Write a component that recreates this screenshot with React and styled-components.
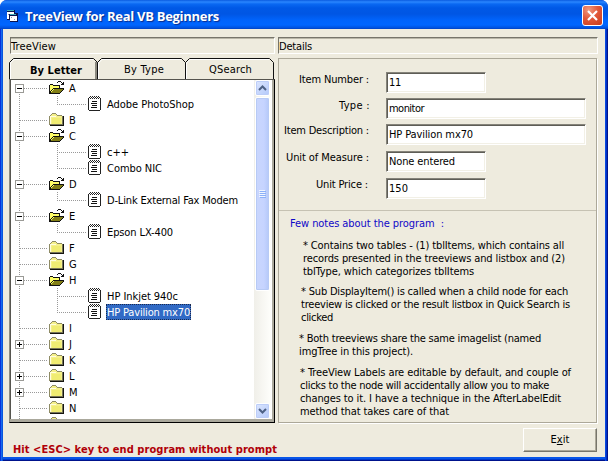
import React, { useLayoutEffect, useRef, useState } from 'react';
import styled, { createGlobalStyle, css } from 'styled-components';

const Global = createGlobalStyle`
  * { box-sizing: border-box; }
  body { margin: 0; overflow: hidden; }
`;

const ui = '"DejaVu Sans Condensed", "DejaVu Sans", "Noto Sans", sans-serif';
const face = '#eeebde';

const Window = styled.div`
  width: 608px;
  height: 461px;
  display: flex;
  flex-direction: column;
  background: linear-gradient(90deg, #0831d9 0 1px, #166aee 1px 2px, #0855dd 2px 3px, transparent 3px 605px, #0848e0 605px 606px, #0032c4 606px 607px, #00138c 607px), linear-gradient(0deg, #00138c 0 1px, #0038cc 1px 2px, #0855e8 2px 4px, transparent 4px), #0831d9;
  border-radius: 7px 7px 0 0;
  font: 11px/13px ${ui};
  font-stretch: condensed;
  color: #000;
`;

const TitleBar = styled.header`
  height: 29px;
  flex: none;
  display: flex;
  align-items: center;
  padding: 2px 5px 0 7px;
  border-radius: 7px 7px 0 0;
  background: linear-gradient(180deg, #0a5be0 0, #2a86ff 2px, #0a68f2 4px, #0058e6 8px, #0056e4 14px, #0063fb 20px, #0066ff 25px, #0050dc 28px, #0040c0 29px);
`;

const TitleText = styled.h1`
  margin: 0 auto 0 7px;
  font: bold 13px/18px "Open Sans", "Noto Sans", sans-serif;
  font-stretch: normal;
  color: #fff;
  text-shadow: 1px 1px 1px #0a2c8c;
`;

const CloseButton = styled.button`
  width: 21px;
  height: 21px;
  padding: 0;
  display: grid;
  place-items: center;
  border: 1px solid #fff;
  border-radius: 3px;
  background: radial-gradient(circle at 30% 20%, #f09a80 0, #e2593a 45%, #c83a1a 100%);
`;

const Body = styled.main`
  flex: 1;
  min-height: 0;
  margin: 0 3px 4px;
  padding: 8px 7px 0 6px;
  background: ${face};
  display: grid;
  grid-template-columns: 266px 320px;
  grid-template-rows: 386px 34px;
  column-gap: 3px;
`;

const Column = styled.section`
  display: flex;
  flex-direction: column;
`;

const Caption = styled.div`
  height: 17px;
  flex: none;
  margin-left: ${p => p.$inset || 0}px;
  padding-top: 2px;
  border: 1px solid;
  border-color: #77756b #fff #fff #77756b;
  box-shadow: inset 0 1px #b9b6a8;
`;

const FitSpan = styled.span`
  display: inline-block;
  white-space: pre;
`;

/* Spreads or tightens the tracking so that a line takes a given width. */
function Fit({ w, children }) {
  const ref = useRef(null);
  const [spacing, setSpacing] = useState(null);
  useLayoutEffect(() => {
    const el = ref.current;
    el.style.letterSpacing = '0px';
    const n = el.textContent.length;
    setSpacing((w - el.getBoundingClientRect().width) / n);
  }, [w]);
  return <FitSpan ref={ref} style={{ letterSpacing: spacing === null ? undefined : `${spacing}px` }}>{children}</FitSpan>;
}

const TabStrip = styled.nav`
  display: grid;
  grid-template-columns: 88px 88px 90px;
  height: 21px;
  margin-top: 4px;
`;

const Tab = styled.button`
  position: relative;
  padding: 2px 0 0 ${p => p.$pad}px;
  border: 0;
  background: none;
  text-align: left;
  font: inherit;
  color: #000;
  ${p => p.$active && css`font-weight: bold; padding-top: 3px;`}
`;

const TabShape = styled.svg`
  position: absolute;
  left: 0;
  top: 0;
`;

const TreeFrame = styled.div`
  height: 344px;
  display: grid;
  grid-template-columns: 243px 17px;
  border: 1px solid #000;
  border-left-color: #8d8b82;
  border-top-color: #55544e;
  box-shadow: inset -2px -3px #aaa89c, inset 1px 0 #55544e;
  padding: 0 4px 3px 1px;
  background: #fff;
`;

const Tree = styled.ul`
  margin: 0;
  padding: 0;
  height: 339px;
  overflow: hidden;
  list-style: none;
`;

const Node = styled.li`
  height: 16px;
  display: flex;
  align-items: center;
`;

const Drawing = styled.svg`
  display: block;
  flex: none;
  shape-rendering: crispEdges;
`;

const NodeLabel = styled.span`
  height: 16px;
  padding: 2px 1px 0;
  margin-left: ${p => (p.$child ? 4 : 3)}px;
  ${p => p.$selected && css`
    background: #316ac5;
    color: #fff;
    outline: 1px dotted #1a2a50;
    outline-offset: -1px;
  `}
`;

const ScrollBar = styled.div`
  display: flex;
  flex-direction: column;
  justify-content: space-between;
  background: linear-gradient(90deg, #f0efe9, #fefefb);
  height: 339px;
  padding: 0 1px;
`;

const ScrollButton = styled.div`
  height: 16px;
  display: grid;
  place-items: center;
  border: 1px solid #fff;
  border-radius: 2px;
  background: linear-gradient(135deg, #dce6fe, #b4c9fa);
  box-shadow: inset 0 0 0 1px #bccdf8;
`;

const Thumb = styled.div`
  height: 194px;
  margin: 1px 0 auto;
  display: grid;
  place-items: center;
  border: 1px solid #fff;
  border-radius: 2px;
  background: linear-gradient(90deg, #c9d6fd, #c6d4ff 60%, #b4c8f8);
  box-shadow: inset 0 0 0 1px #b7caf5;
`;

const Panel = styled.div`
  margin: 4px 0 0 0;
  width: 319px;
  height: 365px;
  border: 1px solid #aca899;
  box-shadow: 1px 1px #fff;
`;

const Form = styled.form`
  height: 152px;
  padding-top: 13px;
  border-bottom: 1px solid #c6c2b3;
`;

const Field = styled.label`
  display: grid;
  grid-template-columns: ${p => p.$edge}px 1fr;
  height: ${p => p.$h}px;
`;

const FieldName = styled.span`
  text-align: right;
  padding-top: ${p => p.$drop}px;
`;

const FieldBox = styled.span`
  width: ${p => (p.$wide ? 200 : 100)}px;
  height: 21px;
  margin-left: ${p => p.$gap}px;
  padding: 3px 0 0 2px;
  background: #fff;
  border: 1px solid;
  border-color: #85837a #fff #fff #85837a;
  box-shadow: inset 1px 1px #5e5d56, inset -1px -1px #f2f0e6;
`;

const Notes = styled.div`
  padding-top: 6px;
`;

const NotesTitle = styled.h2`
  margin: 0 0 9px 11px;
  font: inherit;
  color: #1008c8;
`;

const Note = styled.p`
  margin: 0 0 ${p => p.$after}px ${p => p.$left}px;
  display: flex;
  flex-direction: column;
  align-items: flex-start;
`;

const Warning = styled.footer`
  padding: 20px 0 0 4px;
  font-weight: bold;
  color: #b00008;
`;

const ExitButton = styled.button`
  justify-self: end;
  width: 74px;
  height: 24px;
  margin: 5px 1px 0 0;
  padding: 0 0 1px;
  font: inherit;
  color: #000;
  background: ${face};
  border: 1px solid;
  border-color: #fff #77756b #77756b #fff;
  box-shadow: inset -1px -1px #aca899;
`;

const AppIcon = () => (
  <Drawing width="11" height="12" viewBox="0 0 11 12">
    <path d="M0 0h8v3h3v9h-8v-2h-3z" fill="#0a1450" />
    <path d="M0 2h2v7h-2zM2 2h5v2h-5z" fill="#fff" />
    <path d="M0 0h7v1h-7z" fill="#3fb0b8" />
    <path d="M3 4h6v1h-6z" fill="#3fb0b8" />
    <path d="M3 6h7v5h-7z" fill="#fff" />
    <path d="M1 4h1v1h-1zM4 7h1v1h-1zM7 9h1v1h-1z" fill="#8898b8" />
  </Drawing>
);

const Folder = () => (
  <Drawing width="16" height="16" viewBox="0 0 16 16">
    <path d="M1 4h1v-1h1v-1h4v1h1v1h5v9h-12z" fill="#f5f08a" />
    <path d="M3 6h9v6h-9z" fill="#f0ec72" />
    <path d="M0 4h1v9h-1zM1 3h1v1h-1zM2 2h1v1h-1zM3 1h4v1h-4zM7 2h1v1h-1zM8 3h5v1h-5z" fill="#8e8b65" />
    <path d="M1 4h6v1h-6zM1 4h1v8h-1z" fill="#fffde0" />
    <path d="M13 4h1v9h-1zM1 12h13v1h-13z" fill="#77755a" />
    <path d="M14 4h1v10h-14v-1h13z" fill="#151510" />
  </Drawing>
);

const OpenFolder = () => (
  <Drawing width="16" height="16" viewBox="0 0 16 16">
    <path d="M1 5h3v1h6v3h-5l-4 4z" fill="#ffff66" />
    <path d="M1 4h3v1h-3zM0 5h1v9h-1zM4 5h7v1h-7zM10 6h1v2h-1z" fill="#111" />
    <path d="M5 9h9l-4 4h-9z" fill="#827f16" />
    <path d="M4 8h11v1h-11zM3 9h1v1h-1zM2 10h1v1h-1zM1 11h1v2h-1zM14 9h1v1h-1zM13 10h1v1h-1zM12 11h1v1h-1zM11 12h1v1h-1zM0 13h11v1h-11z" fill="#111" />
    <path d="M8 2h1v1h-1zM9 1h3v1h-3zM12 2h1v1h-1zM13 3h1v1h-1zM14 2h1v3h-1zM12 4h2v1h-2z" fill="#111" />
  </Drawing>
);

const Doc = () => (
  <Drawing width="14" height="16" viewBox="0 0 14 16">
    <path d="M1 2h11v13h-11z" fill="#fff" />
    <path d="M0 2h1v12h-1zM12 2h1v12h-1zM1 14h11v1h-11zM1 1h1v1h-1zM3 1h1v1h-1zM5 1h1v1h-1zM7 1h1v1h-1zM9 1h1v1h-1zM11 1h1v1h-1zM2 0h1v1h-1zM4 0h1v1h-1zM6 0h1v1h-1zM8 0h1v1h-1zM10 0h1v1h-1zM2 2h1v1h-1zM4 2h1v1h-1zM6 2h1v1h-1zM8 2h1v1h-1zM10 2h1v1h-1z" fill="#222" />
    <path d="M4 5h5v1h-5zM3 7h6v1h-6zM4 9h5v1h-5zM3 11h6v1h-6z" fill="#111" />
  </Drawing>
);

const Guides = ({ child, first, lastChild, trunk, sign }) => (
  <Drawing width={child ? 77 : 38} height="16" viewBox={`0 0 ${child ? 77 : 38} 16`}>
    <g stroke="#999" strokeDasharray="1 1" fill="none">
      {trunk && <path d={first ? 'M8.5 8v8' : 'M8.5 0v16'} />}
      {child
        ? <path d={lastChild ? 'M46.5 0v8M46 8.5h30' : 'M46.5 0v16M46 8.5h30'} />
        : <path d="M9 8.5h28" />}
    </g>
    {sign && (
      <g>
        <rect x="4.5" y="4.5" width="8" height="8" fill="#fff" stroke="#9a9a96" />
        <path d={sign === '+' ? 'M6 8.5h5M8.5 6v5' : 'M6 8.5h5'} stroke="#000" />
      </g>
    )}
  </Drawing>
);

const Chevron = ({ down }) => (
  <svg width="9" height="6" viewBox="0 0 9 6">
    <path d={down ? 'M1 1l3.5 3.5L8 1' : 'M1 5l3.5-3.5L8 5'} fill="none" stroke="#4d6185" strokeWidth="2" />
  </svg>
);

const nodes = [
  { t: 'A', w: 7, open: true, sign: '-', first: true },
  { t: 'Adobe PhotoShop', w: 87, child: true, last: true },
  { t: 'B', w: 6 },
  { t: 'C', w: 7, open: true, sign: '-' },
  { t: 'c++', w: 22, child: true },
  { t: 'Combo NIC', w: 55, child: true, last: true },
  { t: 'D', w: 7, open: true, sign: '-' },
  { t: 'D-Link External Fax Modem', w: 131, child: true, last: true },
  { t: 'E', w: 6, open: true, sign: '-' },
  { t: 'Epson LX-400', w: 66, child: true, last: true },
  { t: 'F', w: 6 },
  { t: 'G', w: 7 },
  { t: 'H', w: 7, open: true, sign: '-' },
  { t: 'HP Inkjet 940c', w: 71, child: true },
  { t: 'HP Pavilion mx70', w: 83, child: true, last: true, selected: true },
  { t: 'I', w: 4 },
  { t: 'J', w: 5, sign: '+' },
  { t: 'K', w: 7 },
  { t: 'L', w: 5, sign: '+' },
  { t: 'M', w: 9, sign: '+' },
  { t: 'N', w: 7 },
  { t: '', w: 0 },
];

const fields = [
  { name: 'Item Number :', w: 70, edge: 90, drop: 1, h: 26, value: '11', vw: 12 },
  { name: 'Type :', w: 31, edge: 91, drop: 1, h: 26, value: 'monitor', vw: 35, wide: true },
  { name: 'Item Description :', w: 85, edge: 90, drop: -1, h: 27, value: 'HP Pavilion mx70', vw: 84, wide: true },
  { name: 'Unit of Measure :', w: 83, edge: 90, drop: -1, h: 27, value: 'None entered', vw: 66 },
  { name: 'Unit Price :', w: 52, edge: 89, drop: -1, h: 21, value: '150', vw: 19 },
];

const notes = [
  { left: 24, after: 7, lines: [['* Contains two tables - (1) tblItems, which contains all', 261], ['records presented in the treeviews and listbox and (2)', 262], ['tblType, which categorizes tblItems', 171]] },
  { left: 22, after: 8, lines: [['* Sub DisplayItem() is called when a child node for each', 267], ['treeview is clicked or the result listbox in Quick Search is', 269], ['clicked', 32]] },
  { left: 20, after: 8, lines: [['* Both treeviews share the same imagelist (named', 242], ['imgTree in this project).', 114]] },
  { left: 21, after: 0, lines: [['* TreeView Labels are editable by default, and couple of', 271], ['clicks to the node will accidentally allow you to make', 249], ['changes to it. I have a technique in the AfterLabelEdit', 261], ['method that takes care of that', 149]] },
];

const tabs = [
  { t: 'By Letter', w: 52, pad: 21, active: true },
  { t: 'By Type', w: 40, pad: 27 },
  { t: 'QSearch', w: 43, pad: 24 },
];

export default function App() {
  return (
    <>
      <Global />
      <Window>
        <TitleBar>
          <AppIcon />
          <TitleText><Fit w={194}>TreeView for Real VB Beginners</Fit></TitleText>
          <CloseButton aria-label="Close">
            <svg width="13" height="13" viewBox="0 0 13 13">
              <path d="M2 2l9 9M11 2l-9 9" stroke="#fff" strokeWidth="2.2" />
            </svg>
          </CloseButton>
        </TitleBar>
        <Body>
          <Column>
            <Caption $inset={1}><Fit w={45}>TreeView</Fit></Caption>
            <TabStrip>
              {tabs.map(tab => (
                <Tab key={tab.t} $active={tab.active} $pad={tab.pad}>
                  <TabShape width="90" height="21" viewBox="0 0 90 21">
                    <path d="M0.5 21V4.5L4.5 0.5H84.5L88.5 4.5V21" fill="none" stroke="#111" />
                    <path d="M1.5 21V5L5 1.5H84" fill="none" stroke="#fff" />
                    {tab.active && <path d="M87 4v17" stroke="#8b897f" strokeWidth="2" />}
                  </TabShape>
                  <Fit w={tab.w}>{tab.t}</Fit>
                </Tab>
              ))}
            </TabStrip>
            <TreeFrame>
              <Tree>
                {nodes.map((n, i) => (
                  <Node key={i}>
                    <Guides trunk child={n.child} first={n.first} lastChild={n.last} sign={n.sign} />
                    {n.child ? <Doc /> : n.open ? <OpenFolder /> : <Folder />}
                    <NodeLabel $child={n.child} $selected={n.selected}>
                      {n.t && <Fit w={n.w}>{n.t}</Fit>}
                    </NodeLabel>
                  </Node>
                ))}
              </Tree>
              <ScrollBar>
                <ScrollButton><Chevron /></ScrollButton>
                <Thumb>
                  <Drawing width="7" height="8" viewBox="0 0 7 8">
                    <path d="M0 .5h6M0 2.5h6M0 4.5h6M0 6.5h6" stroke="#f0f5ff" />
                    <path d="M1 1.5h6M1 3.5h6M1 5.5h6M1 7.5h6" stroke="#8cb0f8" />
                  </Drawing>
                </Thumb>
                <ScrollButton><Chevron down /></ScrollButton>
              </ScrollBar>
            </TreeFrame>
          </Column>
          <Column>
            <Caption><Fit w={33}>Details</Fit></Caption>
            <Panel>
              <Form>
                {fields.map(f => (
                  <Field key={f.name} $edge={f.edge} $h={f.h}>
                    <FieldName $drop={f.drop}><Fit w={f.w}>{f.name}</Fit></FieldName>
                    <FieldBox $wide={f.wide} $gap={107 - f.edge}><Fit w={f.vw}>{f.value}</Fit></FieldBox>
                  </Field>
                ))}
              </Form>
              <Notes>
                <NotesTitle><Fit w={154}>Few notes about the program  :</Fit></NotesTitle>
                {notes.map(n => (
                  <Note key={n.left} $left={n.left} $after={n.after}>
                    {n.lines.map(([t, w]) => <Fit key={t} w={w}>{t}</Fit>)}
                  </Note>
                ))}
              </Notes>
            </Panel>
          </Column>
          <Warning><Fit w={264}>{'Hit <ESC> key to end program without prompt'}</Fit></Warning>
          <ExitButton><Fit w={19}>E<u>x</u>it</Fit></ExitButton>
        </Body>
      </Window>
    </>
  );
}
